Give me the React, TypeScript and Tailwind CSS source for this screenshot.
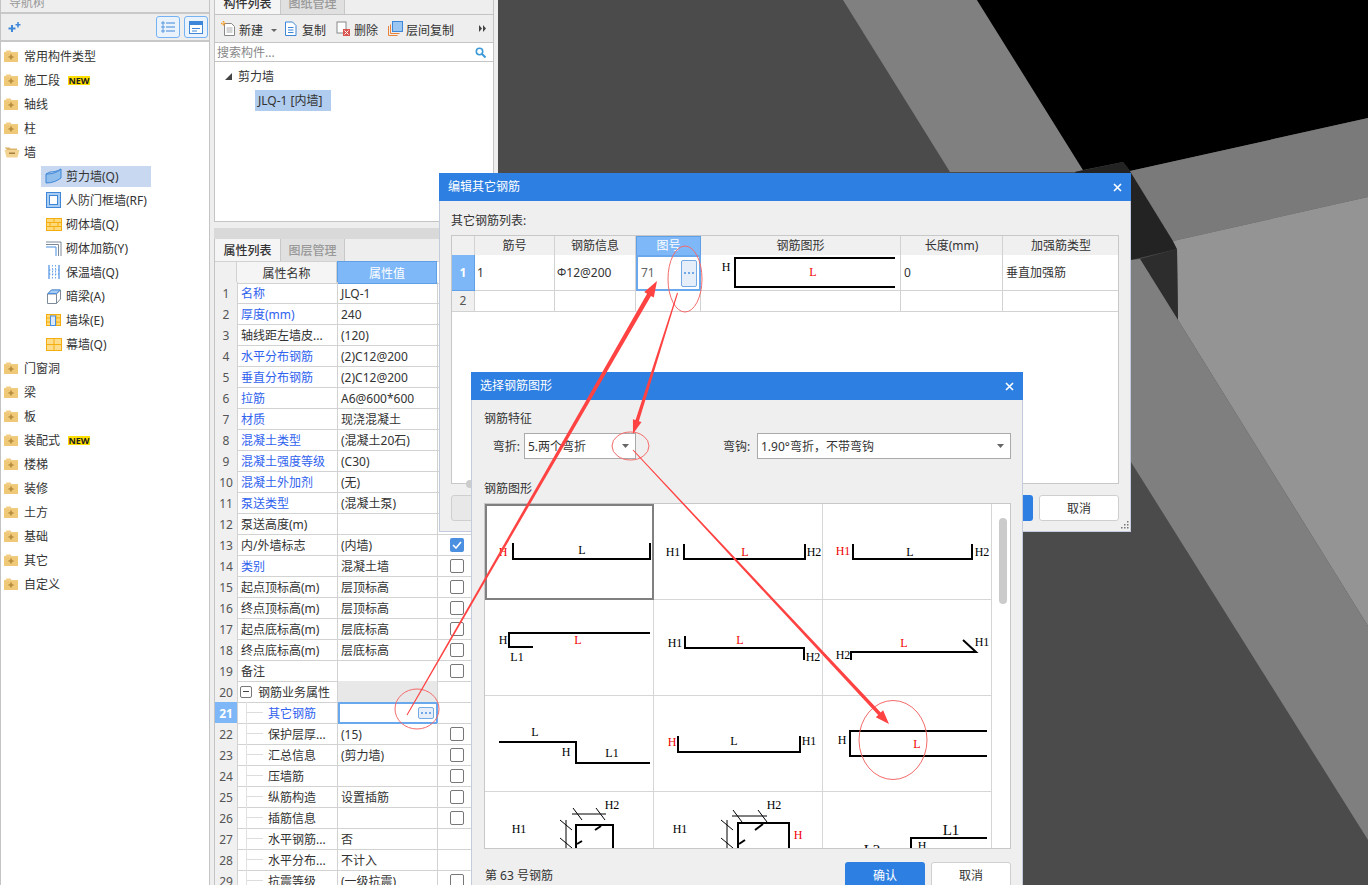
import React from "react";

const F = "font-['Noto_Sans','Noto_Sans_CJK_SC',sans-serif]";
const TX = "pt-[2px]";
const PX = "pt-[3px]";

function Folder({ open }: { open?: boolean }) {
  if (open)
    return (
      <svg width="16" height="12" viewBox="0 0 16 12" className="block">
        <path d="M1 1.5h4.5l1 1H13v2H3.5L1 2z" fill="#dcb56b" />
        <path d="M0.5 4h15l-2 7.5H2.5z" fill="#f3d392" />
        <rect x="5" y="6.5" width="6" height="1.5" fill="#a5803c" />
      </svg>
    );
  return (
    <svg width="14" height="12" viewBox="0 0 14 12" className="block">
      <path d="M0 2h1.5l1-1.5h4l1 1.5H14v10H0z" fill="#f1cd85" />
      <rect x="0" y="3" width="14" height="9" fill="#efc878" />
      <path d="M7 4.5v5M4.5 7h5" stroke="#b58a3c" strokeWidth="1.6" />
    </svg>
  );
}

const subIcons: Record<string, React.ReactNode> = {
  shear: (
    <svg width="18" height="16" viewBox="0 0 18 16" className="block">
      <path d="M1 6c5 0 11-1 15-5v9c-4 3-9 5-15 5z" fill="#8fbdec" stroke="#3d86d8" />
      <path d="M1 6l4-2c4 0 8-1 11-3" fill="none" stroke="#3d86d8" />
    </svg>
  ),
  door: (
    <svg width="15" height="16" viewBox="0 0 15 16" className="block">
      <rect x="0.5" y="0.5" width="14" height="15" fill="#a9cdf2" stroke="#3d86d8" />
      <rect x="3.5" y="3.5" width="8" height="9" fill="#fff" stroke="#3d86d8" />
    </svg>
  ),
  brick: (
    <svg width="16" height="13" viewBox="0 0 16 13" className="block">
      <rect x="0.5" y="0.5" width="15" height="12" fill="#ffd97a" stroke="#f4ae0f" />
      <path d="M0 4.500h16M0 8.500h16M8 0v4.500M4 4.500v4M12 4.500v4M8 8.500v4" stroke="#f4ae0f" fill="none" />
    </svg>
  ),
  rebar: (
    <svg width="16" height="15" viewBox="0 0 16 15" className="block">
      <path d="M0 1h15v14M0 3.500h12.500V15" stroke="#7c8a99" fill="none" />
      <path d="M0 6h10v9" stroke="#4a90e2" fill="none" />
    </svg>
  ),
  insul: (
    <svg width="12" height="14" viewBox="0 0 12 14" className="block">
      <path d="M1 0v14M11 0v14" stroke="#4a90e2" strokeWidth="1.200" />
      <path d="M4.500 0v14M7.500 0v14M1 5h10M1 9h10" stroke="#4a90e2" strokeWidth="0.800" strokeDasharray="1.500 1.500" />
    </svg>
  ),
  beam: (
    <svg width="14" height="15" viewBox="0 0 14 15" className="block">
      <path d="M0.500 5l4-4h9v9l-4 4.500h-9z" fill="#fff" stroke="#7c8a99" />
      <path d="M0.500 5h9v9.500M9.500 5l4-4" fill="none" stroke="#7c8a99" />
      <path d="M1 4.500l3.500-3.500h8.500l-3.500 3.500z" fill="#a9cdf2" stroke="#4a90e2" />
    </svg>
  ),
  pier: (
    <svg width="15" height="12" viewBox="0 0 15 12" className="block">
      <rect x="0.500" y="0.500" width="14" height="11" fill="#ffd97a" stroke="#f4ae0f" />
      <path d="M0 4h15M0 8h15M5 0v12M10 0v12" stroke="#f4ae0f" />
      <rect x="4.500" y="2" width="5" height="9.500" fill="#dbe9f8" stroke="#4a90e2" />
    </svg>
  ),
  curtain: (
    <svg width="16" height="13" viewBox="0 0 16 13" className="block">
      <rect x="0.500" y="0.500" width="15" height="12" fill="#ffdc8a" stroke="#f4ae0f" />
      <path d="M0 6.500h16M8 0v13" stroke="#f4ae0f" />
    </svg>
  ),
};

const navTop: [string, boolean?][] = [["常用构件类型"], ["施工段", true], ["轴线"], ["柱"]];
const navSub: [string, string, boolean?][] = [
  ["剪力墙(Q)", "shear", true],
  ["人防门框墙(RF)", "door"],
  ["砌体墙(Q)", "brick"],
  ["砌体加筋(Y)", "rebar"],
  ["保温墙(Q)", "insul"],
  ["暗梁(A)", "beam"],
  ["墙垛(E)", "pier"],
  ["幕墙(Q)", "curtain"],
];
const navBottom: [string, boolean?][] = [
  ["门窗洞"],
  ["梁"],
  ["板"],
  ["装配式", true],
  ["楼梯"],
  ["装修"],
  ["土方"],
  ["基础"],
  ["其它"],
  ["自定义"],
];

function NavRow({ label, isNew, open }: { label: string; isNew?: boolean; open?: boolean }) {
  return (
    <div className="h-[24px] flex items-center pl-[3px]">
      <div className="w-[20px] flex"><Folder open={open} /></div>
      <span className={TX}>{label}</span>
      {isNew && (
        <span className="ml-[8px] mt-[1px] h-[9px] w-[22px] bg-[#ffdf00] text-[9px] leading-[9px] font-bold text-[#222] text-center">NEW</span>
      )}
    </div>
  );
}

function Nav() {
  return (
    <div className="w-[210px] h-full bg-white border-x border-[#c4c4c4] flex flex-col shrink-0">
      <div className="h-[14px] bg-[#eeeeee] border-b-2 border-[#c8c8c8] pl-[8px] leading-[6px] text-[#999] overflow-hidden shrink-0">导航树</div>
      <div className="h-[28px] bg-[#eeeeee] border-b-2 border-[#c8c8c8] flex items-center justify-between pl-[7px] pr-[1px] shrink-0">
        <svg width="13" height="11" viewBox="0 0 13 11">
          <path d="M4 3v7M.500 6.500h7" stroke="#3d86d8" strokeWidth="2" />
          <path d="M10 0v5.500M7.500 2.700h5" stroke="#3d86d8" strokeWidth="1.500" />
        </svg>
        <div className="flex gap-[4px]">
          <div className="w-[24px] h-[22px] rounded-[3px] border border-[#74b2f2] bg-[#eaf3fc] flex items-center justify-center">
            <svg width="14" height="12" viewBox="0 0 14 12">
              <path d="M1 1h2v2H1zM1 5h2v2H1zM1 9h2v2H1z" fill="none" stroke="#3d86d8" strokeWidth=".8" />
              <path d="M5 2h9M5 6h9M5 10h9" stroke="#3d86d8" />
            </svg>
          </div>
          <div className="w-[24px] h-[22px] rounded-[3px] border border-[#74b2f2] bg-[#eaf3fc] flex items-center justify-center">
            <svg width="14" height="13" viewBox="0 0 14 13">
              <rect x=".5" y=".5" width="13" height="12" fill="#fff" stroke="#3d86d8" />
              <rect x="0" y="0" width="14" height="4" fill="#3d86d8" />
              <path d="M3 7.500h8M3 10h5" stroke="#3d86d8" />
            </svg>
          </div>
        </div>
      </div>
      <div className="pt-[2px]">
        {navTop.map(([l, n]) => <NavRow key={l} label={l} isNew={n} />)}
        <NavRow label="墙" open />
        {navSub.map(([l, ic, sel]) => (
          <div key={l} className="h-[24px] flex items-center pl-[40px]">
            <div className={"w-[110px] h-[21px] flex items-center " + (sel ? "bg-[#c7d8f0]" : "")}>
              <div className="w-[25px] flex justify-center">{subIcons[ic]}</div>
              <span className={TX}>{l}</span>
            </div>
          </div>
        ))}
        {navBottom.map(([l, n]) => <NavRow key={l} label={l} isNew={n} />)}
      </div>
    </div>
  );
}

function Tab({ label, active, clip }: { label: string; active?: boolean; clip?: boolean }) {
  return (
    <div
      className={
        "w-[65px] text-center font-medium " +
        (clip ? "h-[14px] leading-[8px] " : "h-[22px] leading-[23px] ") +
        (active ? "bg-[#f5f5f5] text-[#333]" : "bg-[#e0e0e0] text-[#999] border-x border-[#c8c8c8]")
      }
    >
      {label}
    </div>
  );
}

function ToolBtn({ icon, label, w }: { icon: React.ReactNode; label: string; w: string }) {
  return (
    <div className={"flex items-center " + w}>
      <div className="w-[18px] flex">{icon}</div>
      <span className="pt-[5px]">{label}</span>
    </div>
  );
}

const props: [string, string, string, number?][] = [
  ["名称", "JLQ-1", "b"],
  ["厚度(mm)", "240", "b"],
  ["轴线距左墙皮...", "(120)", ""],
  ["水平分布钢筋", "(2)C12@200", "b"],
  ["垂直分布钢筋", "(2)C12@200", "b"],
  ["拉筋", "A6@600*600", "b"],
  ["材质", "现浇混凝土", "b"],
  ["混凝土类型", "(混凝土20石)", "b"],
  ["混凝土强度等级", "(C30)", "b"],
  ["混凝土外加剂", "(无)", "b"],
  ["泵送类型", "(混凝土泵)", "b"],
  ["泵送高度(m)", "", ""],
  ["内/外墙标志", "(内墙)", "", 2],
  ["类别", "混凝土墙", "b", 1],
  ["起点顶标高(m)", "层顶标高", "", 1],
  ["终点顶标高(m)", "层顶标高", "", 1],
  ["起点底标高(m)", "层底标高", "", 1],
  ["终点底标高(m)", "层底标高", "", 1],
  ["备注", "", "", 1],
  ["钢筋业务属性", "", "g"],
  ["其它钢筋", "", "s"],
  ["保护层厚...", "(15)", "i", 1],
  ["汇总信息", "(剪力墙)", "i", 1],
  ["压墙筋", "", "i", 1],
  ["纵筋构造", "设置插筋", "i", 1],
  ["插筋信息", "", "i", 1],
  ["水平钢筋...", "否", "i"],
  ["水平分布...", "不计入", "i"],
  ["抗震等级", "(一级抗震)", "i", 1],
];

function DotsBtn({ cls }: { cls: string }) {
  return (
    <div className={"rounded-[2px] border border-[#74a9e4] bg-[#e6eff9] flex items-center justify-center " + cls}>
      <svg width="10" height="2" viewBox="0 0 10 2"><path d="M0 1h2M4 1h2M8 1h2" stroke="#4a90e2" strokeWidth="1.600" /></svg>
    </div>
  );
}

function PropRow({ i, p }: { i: number; p: [string, string, string, number?] }) {
  const [name, value, kind, chk] = p;
  const line = "border-b border-r border-[#d2d2d2]";
  const indent = kind === "i" || kind === "s";
  return (
    <div className="grid grid-cols-[23px_100px_100px_57px] h-[21px] shrink-0">
      <div className={"flex items-center justify-center pt-[3px] " + line + " " + (kind === "s" ? "bg-[#7db7f7] text-white font-bold" : "bg-[#f0f0f0] text-[#555]")}>{i}</div>
      <div className={"flex items-center overflow-hidden whitespace-nowrap " + line + " " + (kind === "b" || kind === "s" ? "text-[#2f62ee] " : "")}>
        {kind === "g" ? (
          <div className="flex items-center pl-[2px]">
            <div className="w-[12px] h-[12px] border border-[#777] rounded-[2px] flex items-center justify-center mr-[6px]">
              <div className="w-[6px] h-px bg-[#444]" />
            </div>
            <span className={PX}>{name}</span>
          </div>
        ) : indent ? (
          <div className="flex items-center h-full pl-[8px]">
            <div className="w-[17px] h-full border-l border-[#e2e2e2] flex items-center mr-[5px]"><div className="w-full h-px bg-[#ddd]" /></div>
            <span className={PX}>{name}</span>
          </div>
        ) : (
          <span className={"pl-[3px] " + PX}>{name}</span>
        )}
      </div>
      {kind === "s" ? (
        <div className="border-2 border-[#6aa8ee] bg-white flex items-center justify-end pr-[2px]">
          <DotsBtn cls="w-[16px] h-[12px]" />
        </div>
      ) : (
        <div className={"flex items-center pl-[3px] overflow-hidden whitespace-nowrap " + line + " " + (kind === "g" ? "bg-[#e8e8e8]" : "")}>
          <span className={PX}>{value}</span>
        </div>
      )}
      <div className="border-b border-[#d2d2d2] flex items-center pl-[12px]">
        {chk === 1 && <div className="w-[14px] h-[14px] rounded-[2px] border border-[#777] bg-white" />}
        {chk === 2 && (
          <div className="w-[14px] h-[14px] rounded-[2px] bg-[#4a8fe0] flex items-center justify-center">
            <svg width="10" height="8" viewBox="0 0 10 8"><path d="M1 4l3 3 5-6" fill="none" stroke="#fff" strokeWidth="1.600" /></svg>
          </div>
        )}
      </div>
    </div>
  );
}

function Middle() {
  return (
    <div className="w-[288px] h-full bg-[#eeeeee] px-[4px] flex flex-col overflow-hidden shrink-0">
      <div className="h-[222px] shrink-0 bg-white border-x border-b border-[#c4c4c4] flex flex-col">
        <div className="h-[15px] bg-[#eeeeee] border-b border-[#c4c4c4] flex overflow-hidden shrink-0">
          <Tab label="构件列表" active clip />
          <Tab label="图纸管理" clip />
        </div>
        <div className="h-[28px] bg-[#eeeeee] border-b border-[#c4c4c4] flex items-center pl-[6px] shrink-0 relative">
          <ToolBtn
            w="w-[63px]"
            label="新建"
            icon={
              <svg width="15" height="15" viewBox="0 0 15 15">
                <path d="M3.500 2.500h7l3 3v9h-10z" fill="#fff" stroke="#888" />
                <path d="M5.500 7h6M5.500 9h6M5.500 11h6" stroke="#aaa" />
                <path d="M0 2.500h5M2.500 0v5" stroke="#f59a23" strokeWidth="1.500" strokeDasharray="1 .5" />
              </svg>
            }
          />
          <ToolBtn
            w="w-[52px]"
            label="复制"
            icon={
              <svg width="14" height="15" viewBox="0 0 14 15">
                <path d="M1.500 1h7l3.500 3.500v10h-10.500z" fill="#fff" stroke="#3d86d8" />
                <path d="M4 6.500h5.500M4 9h5.500M4 11.500h5.500" stroke="#3d86d8" />
              </svg>
            }
          />
          <ToolBtn
            w="w-[52px]"
            label="删除"
            icon={
              <svg width="15" height="15" viewBox="0 0 15 15">
                <rect x="1" y="1" width="9" height="11" fill="#fff" stroke="#888" />
                <rect x="7" y="8" width="7" height="7" fill="#d9534f" />
                <path d="M8.500 9.500l4 4M12.500 9.500l-4 4" stroke="#fff" />
              </svg>
            }
          />
          <ToolBtn
            w="w-[80px]"
            label="层间复制"
            icon={
              <svg width="15" height="15" viewBox="0 0 15 15">
                <path d="M.5 5v9.500h9M2.500 3.500v9h9" fill="none" stroke="#e8833a" />
                <rect x="4.500" y=".5" width="10" height="10" fill="#9cc6f2" stroke="#3d86d8" />
              </svg>
            }
          />
          <svg width="7" height="7" viewBox="0 0 7 7" className="ml-[11px]"><path d="M0 0l3 3.500L0 7zM4 0l3 3.500L4 7z" fill="#444" /></svg>
          <svg width="6" height="3" viewBox="0 0 6 3" className="absolute left-[56px] top-[14px]"><path d="M0 0h6L3 3z" fill="#666" /></svg>
        </div>
        <div className="h-[19px] bg-white border-b border-[#c4c4c4] flex items-center justify-between pl-[2px] pr-[7px] text-[#888] shrink-0">
          <span className={TX}>搜索构件...</span>
          <svg width="11" height="11" viewBox="0 0 11 11"><circle cx="4.500" cy="4.500" r="3.200" fill="none" stroke="#3d9ad8" strokeWidth="1.600" /><path d="M7 7l3.500 3.500" stroke="#3d9ad8" strokeWidth="2" /></svg>
        </div>
        <div className="flex-1 pt-[4px]">
          <div className="h-[21px] flex items-center pl-[10px]">
            <svg width="7" height="7" viewBox="0 0 7 7" className="mr-[6px]"><path d="M7 0v7H0z" fill="#444" /></svg>
            <span>剪力墙</span>
          </div>
          <div className="pl-[40px] mt-[3px]">
            <div className="w-[76px] h-[21px] bg-[#b0ccee] flex items-center pl-[3px] whitespace-nowrap">JLQ-1 [内墙]</div>
          </div>
        </div>
      </div>
      <div className="h-[6px] shrink-0" />
      <div className="h-[11px] bg-[#d9d9d9] shrink-0" />
      <div className="flex-1 bg-white border-x border-[#c4c4c4] flex flex-col overflow-hidden">
        <div className="h-[22px] bg-[#eeeeee] flex shrink-0">
          <Tab label="属性列表" active />
          <Tab label="图层管理" />
        </div>
        <div className="grid grid-cols-[22px_100px_100px_57px] h-[21px] shrink-0">
          <div className="bg-[#f0f0f0] border-y border-r border-[#d2d2d2]" />
          <div className="bg-[#f5f5f5] border-y border-r border-[#d2d2d2] flex items-center justify-center pt-[3px]">属性名称</div>
          <div className="bg-[#7eb8f8] border border-[#5e9fe6] text-white flex items-center justify-center pt-[3px]">属性值</div>
          <div className="bg-white border-y border-[#d2d2d2]" />
        </div>
        {props.map((p, i) => <PropRow key={i} i={i + 1} p={p} />)}
      </div>
    </div>
  );
}

function Canvas() {
  return (
    <div className="flex-1 h-full bg-[#4b4b4b]">
      <svg width="870" height="885" viewBox="498 0 870 885" className="block">
        <polygon points="843,0 977,0 1083,170 1075,172 950,172" fill="#808080" />
        <polygon points="977,0 1368,0 1368,118 1130,171 1123,162 1083,170" fill="#000" />
        <polygon points="1075,172 1123,162 1130,171 1173,241 1177,249 1131,260" fill="#232323" />
        <polygon points="1130,171 1368,118 1368,197 1173,241" fill="#7a7a7a" />
        <polygon points="1173,241 1368,197 1368,626 1178,320 1177,249" fill="#949494" />
        <polygon points="1140,259 1177,249 1178,320" fill="#2d2d2d" />
        <polygon points="1131,260 1140,259 1178,320 1368,626 1368,840 1131,462" fill="#7f7f7f" />
      </svg>
    </div>
  );
}

function TitleBar({ title }: { title: string }) {
  return (
    <div className="h-[28px] bg-[#2e7fe2] text-white flex items-center justify-between pl-[9px] pr-[9px] shrink-0">
      <span>{title}</span>
      <svg width="9" height="9" viewBox="0 0 9 9"><path d="M1 1l7 7M8 1L1 8" stroke="#fff" strokeWidth="1.600" /></svg>
    </div>
  );
}

const Btn = ({ label, blue, w }: { label: string; blue?: boolean; w: string }) => (
  <div className={"h-[26px] rounded-[3px] flex items-center justify-center pt-[2px] " + w + " " + (blue ? "bg-[#2e7fe2] text-white" : "bg-white border border-[#cfcfcf] text-[#333]")}>{label}</div>
);

function Draw({ x, y, w, h, children }: { x: number; y: number; w: number; h: number; children: React.ReactNode }) {
  return (
    <svg width={w} height={h} viewBox={`${x} ${y} ${w} ${h}`} className="block font-['Liberation_Serif',serif] text-[12px]">
      {children}
    </svg>
  );
}

const T = ({ x, y, t, red, size }: { x: number; y: number; t: string; red?: boolean; size?: number }) => (
  <text x={x} y={y} textAnchor="middle" dominantBaseline="central" fill={red ? "#f00000" : "#000"} fontSize={size}>{t}</text>
);
const P = ({ d, w = 2 }: { d: string; w?: number }) => (
  <polyline points={d} fill="none" stroke="#000" strokeWidth={w} />
);

function Dialog1() {
  const cols = "grid grid-cols-[23px_80px_81px_65px_200px_102px_116px]";
  const h = "bg-[#f0f0f0] border-r border-b border-[#d2d2d2] flex items-center justify-center text-[#333]";
  const c = "bg-white border-r border-b border-[#d2d2d2] flex items-center pl-[2px]";
  return (
    <div className="absolute left-[439px] top-[173px] w-[692px] h-[359px] flex flex-col">
      <TitleBar title="编辑其它钢筋" />
      <div className="flex-1 bg-[#efefef] border-x border-b border-[#c4cbdc] px-[11px] flex flex-col relative">
        <div className="mt-[12px] h-[16px] leading-[16px]">其它钢筋列表:</div>
        <div className="mt-[6px] h-[249px] bg-white border border-[#c8c8c8] flex flex-col overflow-hidden">
          <div className={cols + " h-[19px]"}>
            <div className={h} />
            <div className={h}>筋号</div>
            <div className={h}>钢筋信息</div>
            <div className="bg-[#7eb8f8] border border-[#5e9fe6] text-white flex items-center justify-center">图号</div>
            <div className={h}>钢筋图形</div>
            <div className={h}>长度(mm)</div>
            <div className={h + " border-r-0"}>加强筋类型</div>
          </div>
          <div className={cols + " h-[36px]"}>
            <div className="bg-[#7db7f7] border-r border-b border-[#5e9fe6] text-white font-bold flex items-center justify-center">1</div>
            <div className={c}>1</div>
            <div className={c + " whitespace-nowrap"}>
              <span className="text-[11px]">Φ</span>12@200
            </div>
            <div className="bg-white border-2 border-[#6aa8ee] flex items-center justify-between pl-[3px] pr-[2px] text-[#666]">
              <span>71</span>
              <DotsBtn cls="w-[16px] h-[27px]" />
            </div>
            <div className="bg-white border-r border-b border-[#d2d2d2] overflow-hidden">
              <Draw x={701} y={255} w={199} h={35}>
                <T x={726} y={267} t="H" />
                <P d="895,258 735,258 735,287 895,287" />
                <T x={813} y={272} t="L" red />
              </Draw>
            </div>
            <div className={c + " pl-[3px]"}>0</div>
            <div className={c + " pl-[3px] border-r-0"}>垂直加强筋</div>
          </div>
          <div className={cols + " h-[21px]"}>
            <div className="bg-[#f0f0f0] border-r border-b border-[#d2d2d2] flex items-center justify-center text-[#555]">2</div>
            {[0, 1, 2, 3, 4].map((k) => <div key={k} className={c} />)}
            <div className={c + " border-r-0"} />
          </div>
        </div>
        <div className="mt-[11px] flex justify-between">
          <Btn label="" w="w-[80px] !bg-[#e8e8e8]" />
          <div className="flex gap-[6px]">
            <Btn label="确认" blue w="w-[80px]" />
            <Btn label="取消" w="w-[80px]" />
          </div>
        </div>
        <div className="absolute left-[26px] top-[279px] w-[8px] h-[8px] rounded-full bg-[#cccccc]" />
        <svg width="9" height="9" viewBox="0 0 9 9" className="absolute right-[1px] bottom-[2px]">
          <path d="M7 1h1.500v1.500H7zM4 4h1.500v1.500H4zM7 4h1.500v1.500H7zM1 7h1.500v1.500H1zM4 7h1.500v1.500H4zM7 7h1.500v1.500H7z" fill="#777" />
        </svg>
      </div>
    </div>
  );
}

const Caret = () => <svg width="7" height="4" viewBox="0 0 7 4"><path d="M0 0h7L3.500 4z" fill="#666" /></svg>;

const shapes: React.ReactNode[] = [
  <><T x={503} y={552} t="H" red /><P d="513,543 513,559 650,559 650,543" /><T x={582} y={550} t="L" /></>,
  <><T x={673} y={552} t="H1" /><P d="684,544 684,559 805,559 805,544" /><T x={745} y={552} t="L" red /><T x={814} y={552} t="H2" /></>,
  <><T x={843} y={551} t="H1" red /><P d="853,544 853,559 972,559 972,544" /><T x={910} y={552} t="L" /><T x={982} y={552} t="H2" /></>,
  <><T x={503} y={640} t="H" /><P d="650,633 509,633 509,647 533,647" /><T x={578} y={640} t="L" red /><T x={517} y={657} t="L1" /></>,
  <><T x={675} y={643} t="H1" /><P d="685,636 685,648 804,648 804,660" /><T x={740} y={640} t="L" red /><T x={813} y={657} t="H2" /></>,
  <><T x={843} y={655} t="H2" /><P d="851,660 851,652 976,652 963,640" /><T x={904} y={643} t="L" red /><T x={982} y={642} t="H1" /></>,
  <><P d="499,742 576,742 576,763 650,763" /><T x={535} y={732} t="L" /><T x={566} y={752} t="H" /><T x={612} y={753} t="L1" /></>,
  <><T x={672} y={742} t="H" red /><P d="678,736 678,752 800,752 800,736" /><T x={734} y={741} t="L" /><T x={809} y={741} t="H1" /></>,
  <><T x={842} y={740} t="H" /><P d="987,731 850,731 850,756 987,756" /><T x={917} y={744} t="L" red /></>,
  <>
    <T x={519} y={829} t="H1" /><T x={612} y={805} t="H2" />
    <P d="572,814 606,814" w={1} /><P d="573,808 582,820" w={1} /><P d="596,808 605,820" w={1} />
    <P d="566,820 566,850" w={1} /><P d="560,820 572,830" w={1} /><P d="560,838 572,848" w={1} />
    <P d="576,850 576,825 613,825 613,850" /><P d="595,830 601,826" /><P d="577,844 582,841" />
  </>,
  <>
    <T x={680} y={829} t="H1" /><T x={774} y={805} t="H2" />
    <P d="732,816 767,816" w={1} /><P d="733,810 742,822" w={1} /><P d="758,810 767,822" w={1} />
    <P d="727,820 727,850" w={1} /><P d="721,820 733,830" w={1} /><P d="721,838 733,848" w={1} />
    <P d="738,850 738,823 789,823 789,850" /><P d="755,830 763,824" /><P d="739,844 745,840" />
    <T x={798} y={835} t="H" red />
  </>,
  <><T x={951} y={830} t="L1" size={15} /><P d="911,852 911,838 987,838" /><T x={922} y={846} t="H" /><T x={872} y={850} t="L2" size={15} /></>,
];
const xs = [485, 654, 823];
const ws = [168, 168, 168];
const ys = [504, 600, 696, 792];

function Dialog2() {
  return (
    <div className="absolute left-[471px] top-[372px] w-[552px] h-[520px] flex flex-col">
      <TitleBar title="选择钢筋图形" />
      <div className="flex-1 bg-[#efefef] border-x border-[#c4cbdc] pl-[12px] pr-[11px] flex flex-col">
        <div className="mt-[11px] h-[16px] leading-[16px]">钢筋特征</div>
        <div className="mt-[6px] h-[26px] flex items-center">
          <span className="w-[36px] text-right mr-[4px] shrink-0 pt-[2px] whitespace-nowrap">弯折:</span>
          <div className="w-[112px] h-[26px] bg-white border border-[#aaaaaa] flex items-center justify-between pl-[3px] pr-[6px]">
            <span className={TX}>5.两个弯折</span><Caret />
          </div>
          <span className="ml-[87px] w-[34px] shrink-0 pt-[2px]">弯钩:</span>
          <div className="w-[254px] h-[26px] bg-white border border-[#aaaaaa] flex items-center justify-between pl-[3px] pr-[6px]">
            <span className={TX}>1.90°弯折，不带弯钩</span><Caret />
          </div>
        </div>
        <div className="mt-[22px] h-[16px] leading-[16px]">钢筋图形</div>
        <div className="mt-[6px] h-[346px] bg-white border border-[#c8c8c8] flex overflow-hidden">
          <div className="grid grid-cols-[169px_169px_169px] auto-rows-[96px] overflow-hidden">
            {shapes.map((s, i) => (
              <div key={i} className={"border-r border-b border-[#d6d6d6] overflow-hidden " + (i === 0 ? "outline outline-2 -outline-offset-2 outline-[#808080]" : "")}>
                <Draw x={xs[i % 3]} y={ys[Math.floor(i / 3)]} w={ws[i % 3]} h={95}>{s}</Draw>
              </div>
            ))}
          </div>
          <div className="flex-1 pt-[14px] pr-[3px] flex justify-end">
            <div className="w-[8px] h-[86px] rounded-[4px] bg-[#cbcbcb]" />
          </div>
        </div>
        <div className="mt-[13px] flex justify-between items-center h-[26px]">
          <span className={"pl-[1px] " + TX}>第 63 号钢筋</span>
          <div className="flex gap-[6px]">
            <Btn label="确认" blue w="w-[80px]" />
            <Btn label="取消" w="w-[80px]" />
          </div>
        </div>
      </div>
    </div>
  );
}

function arrow(x1: number, y1: number, x2: number, y2: number, w1: number, w2: number, hl: number, hw: number) {
  const dx = x2 - x1, dy = y2 - y1, L = Math.hypot(dx, dy);
  const ux = dx / L, uy = dy / L, nx = -uy, ny = ux;
  const bx = x2 - ux * hl, by = y2 - uy * hl;
  const pt = (x: number, y: number, o: number) => `${x + nx * o},${y + ny * o}`;
  return [pt(x1, y1, w1 / 2), pt(bx, by, w2 / 2), pt(bx, by, hw / 2), `${x2},${y2}`, pt(bx, by, -hw / 2), pt(bx, by, -w2 / 2), pt(x1, y1, -w1 / 2)].join(" ");
}

function Annotations() {
  return (
    <svg width="1368" height="885" viewBox="0 0 1368 885" className="absolute left-0 top-0 pointer-events-none">
      <g fill="none" stroke="#f46a6a" strokeWidth="1">
        <ellipse cx="417" cy="709" rx="22" ry="20" />
        <ellipse cx="685" cy="279" rx="17" ry="33" />
        <ellipse cx="630.500" cy="446" rx="18.500" ry="14" />
        <ellipse cx="893" cy="740" rx="34" ry="39.500" />
      </g>
      <g fill="#ff4242">
        <polygon points={arrow(407, 715, 657, 281, 1, 4.500, 16, 11)} />
        <polygon points={arrow(677.500, 293, 633, 434, 1, 3.500, 14, 9)} />
        <polygon points={arrow(633, 450, 889, 724, 1, 3.500, 14, 10)} />
      </g>
    </svg>
  );
}

export default function App() {
  return (
    <div className={"relative w-[1368px] h-[885px] overflow-hidden flex text-[12px] text-[#333] " + F}>
      <Nav />
      <Middle />
      <Canvas />
      <Dialog1 />
      <Dialog2 />
      <Annotations />
    </div>
  );
}
